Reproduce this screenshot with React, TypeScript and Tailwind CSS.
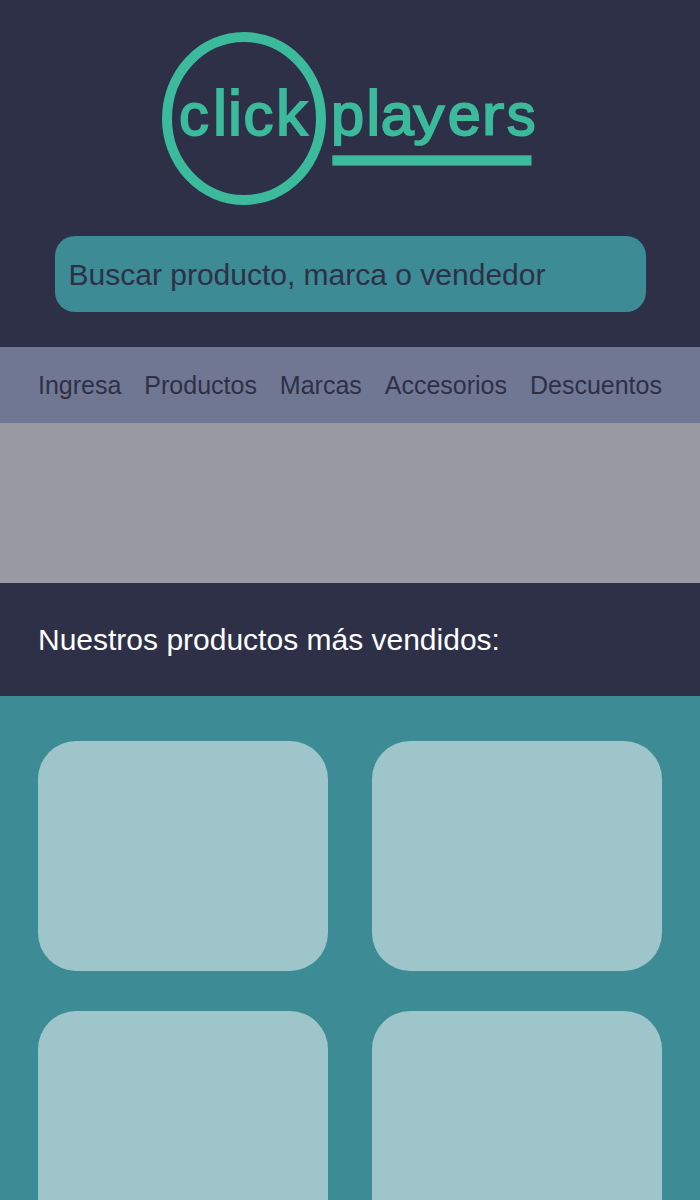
const links = ["Ingresa", "Productos", "Marcas", "Accesorios", "Descuentos"];

function Logo() {
  return (
    <svg className="block h-[174px] w-[376px] overflow-visible" viewBox="162 32 376 174" role="img" aria-label="clickplayers">
      <defs>
        <clipPath id="short-descender">
          <rect x="325" y="70" width="90" height="76" />
        </clipPath>
      </defs>
      <ellipse cx="244" cy="118.5" rx="77" ry="81.5" fill="none" stroke="#3bba9c" strokeWidth="10" />
      <g fill="#3bba9c" stroke="#3bba9c" strokeWidth="1.9" fontFamily="'Liberation Sans', Arial, sans-serif" fontSize="59.5">
        <text x="179 213 228 243.6 276" y="135.2">c<tspan fontSize="63">li</tspan>c<tspan fontSize="63">k</tspan></text>
        <text x="331 366.3 380.7" y="135.2" clipPath="url(#short-descender)">p<tspan fontSize="63">l</tspan>a</text>
        <text transform="translate(413.4 134) scale(1.04 0.9)">y</text>
        <text x="447.8" y="135.2">e</text>
        <text transform="translate(481.3 135.2) scale(1.18 1)" strokeWidth="1.2">r</text>
        <text transform="translate(506.7 135.2) scale(0.97 1)">s</text>
      </g>
      <rect x="332.3" y="155.3" width="199.2" height="10.3" fill="#3bba9c" />
    </svg>
  );
}

export default function App() {
  return (
    <div className="flex h-[1200px] w-[700px] flex-col overflow-hidden bg-[#2e3047] font-['Liberation_Sans',Arial,sans-serif]">
      <header className="flex h-[347px] shrink-0 flex-col items-center pt-8">
        <Logo />
        <input
          className="mt-[30px] h-[76px] w-[591px] rounded-[20px] bg-[#3d8b94] px-[14px] pt-[2px] text-[30px] text-[#2e3047] outline-none placeholder:text-[#2e3047] placeholder:opacity-100"
          placeholder="Buscar producto, marca o vendedor"
        />
      </header>
      <nav className="flex h-[76px] shrink-0 items-center justify-between bg-[#707793] px-[38px] pt-[2px] text-[25px] text-[#2e3047]">
        {links.map((link) => (
          <a key={link} href="#">{link}</a>
        ))}
      </nav>
      <div className="h-[160px] shrink-0 bg-[#9999a4]" />
      <h2 className="flex h-[113px] shrink-0 items-center px-[38px] text-[30px] text-white">Nuestros productos más vendidos:</h2>
      <main className="grid grow auto-rows-[230px] grid-cols-2 gap-x-11 gap-y-10 bg-[#3d8b94] px-[38px] pt-[45px]">
        {[0, 1, 2, 3].map((card) => (
          <div key={card} className="rounded-[38px] bg-[#9ec5ca]" />
        ))}
      </main>
    </div>
  );
}
